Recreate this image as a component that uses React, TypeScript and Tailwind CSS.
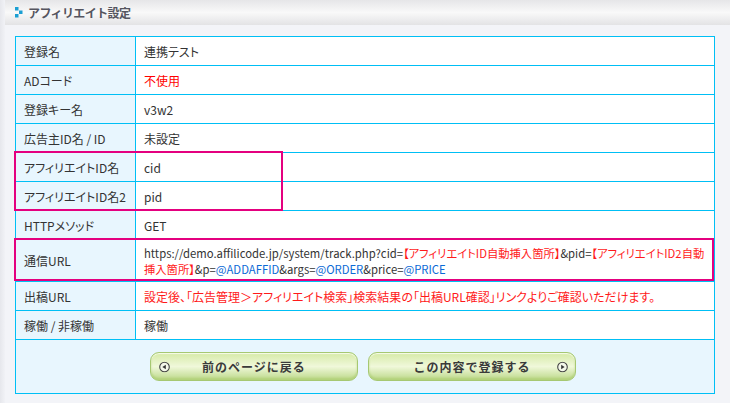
import React from "react";

const font = {
  fontFamily: '"Noto Sans CJK JP", "Liberation Sans", sans-serif',
};

function Row({
  label,
  children,
  h = "h-[28px]",
}: {
  label: string;
  children: React.ReactNode;
  h?: string;
}) {
  return (
    <div className="flex border-b border-[#00bff5]">
      <div
        className={`w-[120px] shrink-0 ${h} bg-[#e8f6fe] border-r border-[#00bff5] flex items-center pl-[8px] text-[#333] whitespace-nowrap`}
      >
        {label}
      </div>
      <div className={`flex-1 ${h} bg-white flex items-center pl-[8px] pr-[4px] text-[#333]`}>
        {children}
      </div>
    </div>
  );
}

function Arrow({ dir }: { dir: "l" | "r" }) {
  return (
    <svg width="11" height="11" viewBox="0 0 11 11">
      <circle cx="5.5" cy="5.5" r="4.8" fill="#f4f8ea" stroke="#444" strokeWidth="1.1" />
      {dir === "l" ? (
        <path d="M3.4 5.5 L6.8 3.3 L6.8 7.7 Z" fill="#333" />
      ) : (
        <path d="M7.6 5.5 L4.2 3.3 L4.2 7.7 Z" fill="#333" />
      )}
    </svg>
  );
}

function Btn({ children, dir }: { children: React.ReactNode; dir: "l" | "r" }) {
  return (
    <button
      className="relative w-[208px] h-[29px] rounded-[9px] border border-[#a6c872] bg-linear-to-b from-[#d6eaa6] via-[#f0f8da] to-[#bcd888] shadow-[inset_0_1px_1px_#f8fcec,inset_0_-2px_2px_#b3d27c] flex items-center justify-center text-[12px] font-bold text-[#3a3a3a] tracking-[1px] [font-feature-settings:normal]"
      style={font}
    >
      <span className={`absolute top-1/2 -translate-y-1/2 flex ${dir === "l" ? "left-[8px]" : "right-[7px]"}`}>
        <Arrow dir={dir} />
      </span>
      {children}
    </button>
  );
}

export default function App() {
  return (
    <div
      className="w-[730px] h-[403px] bg-[#f3f4f8] flex text-[12px] leading-[15px] [font-feature-settings:'palt']"
      style={font}
    >
      <div className="w-[5px] shrink-0 bg-linear-to-r from-[#e6e7ec] to-[#f1f2f6]" />
      <div className="flex-1 flex flex-col">
        <div className="h-[25px] bg-linear-to-b from-[#e6e6e8] via-[#f9f9f9] to-[#e3e3e5] flex items-center pl-[10px]">
          <svg width="8" height="11" viewBox="0 0 8 11" className="mr-[5px]">
            <rect x="0" y="0" width="3.5" height="3.5" fill="#1b9fd3" />
            <rect x="4" y="3.5" width="3.5" height="3.5" fill="#1b9fd3" />
            <rect x="0" y="7" width="3.5" height="3.5" fill="#1b9fd3" />
          </svg>
          <span className="text-[12px] font-bold text-[#55555f] tracking-[-0.6px] [font-feature-settings:normal]">
            アフィリエイト設定
          </span>
        </div>
        <div className="pt-[11px] pl-[10px]">
          <div className="relative w-[700px]">
            <div className="border border-[#00bff5]">
              <Row label="登録名">連携テスト</Row>
              <Row label="ADコード">
                <span className="text-[#ff0000]">不使用</span>
              </Row>
              <Row label="登録キー名">v3w2</Row>
              <Row label="広告主ID名 / ID">未設定</Row>
              <Row label="アフィリエイトID名">cid</Row>
              <Row label="アフィリエイトID名2">pid</Row>
              <Row label="HTTPメソッド">GET</Row>
              <Row label="通信URL" h="h-[41px]">
                <span className="block text-[11.3px] leading-[16px]">
                  <span className="whitespace-nowrap">
                    https://demo.affilicode.jp/system/track.php?cid=
                    <span className="text-[#ff1a1a]">【アフィリエイトID自動挿入箇所】</span>&amp;pid=
                    <span className="text-[#ff1a1a]">【アフィリエイトID2自動</span>
                  </span>
                  <br />
                  <span className="text-[#ff1a1a]">挿入箇所】</span>&amp;p=
                  <span className="text-[#0a6ad6]">@ADDAFFID</span>&amp;args=
                  <span className="text-[#0a6ad6]">@ORDER</span>&amp;price=
                  <span className="text-[#0a6ad6]">@PRICE</span>
                </span>
              </Row>
              <Row label="出稿URL">
                <span className="text-[#ff1a1a] whitespace-nowrap">
                  設定後、「広告管理＞アフィリエイト検索」検索結果の「出稿URL確認」リンクよりご確認いただけます。
                </span>
              </Row>
              <Row label="稼働 / 非稼働">稼働</Row>
              <div className="h-[53px] bg-[#e8f6fe] flex items-center justify-center gap-[10px] pr-[4px]">
                <Btn dir="l">前のページに戻る</Btn>
                <Btn dir="r">この内容で登録する</Btn>
              </div>
            </div>
            <div className="absolute left-[-1px] top-[115px] w-[269px] h-[60px] border-2 border-[#e4007f] pointer-events-none" />
            <div className="absolute left-[-1px] top-[202px] w-[700px] h-[43px] border-2 border-[#e4007f] pointer-events-none" />
          </div>
        </div>
      </div>
    </div>
  );
}
